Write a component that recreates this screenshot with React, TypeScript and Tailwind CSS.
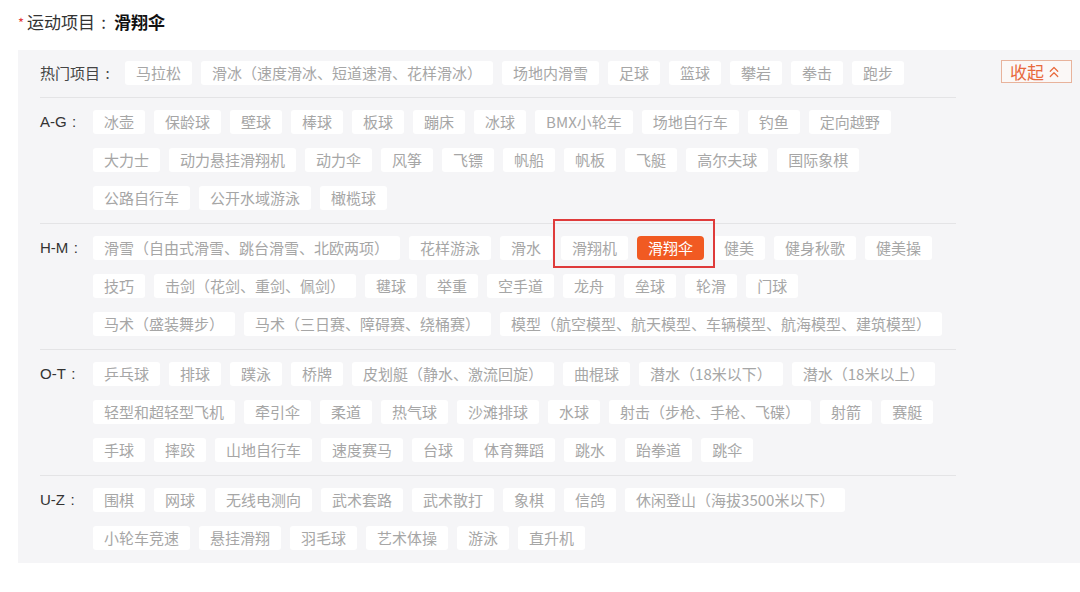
import { ChevronsUp } from 'lucide-react';

const hot = ['马拉松', '滑冰（速度滑冰、短道速滑、花样滑冰）', '场地内滑雪', '足球', '篮球', '攀岩', '拳击', '跑步'];

const groups: { label: string; rows: string[][] }[] = [
  {
    label: 'A-G',
    rows: [
      ['冰壶', '保龄球', '壁球', '棒球', '板球', '蹦床', '冰球', 'BMX小轮车', '场地自行车', '钓鱼', '定向越野'],
      ['大力士', '动力悬挂滑翔机', '动力伞', '风筝', '飞镖', '帆船', '帆板', '飞艇', '高尔夫球', '国际象棋'],
      ['公路自行车', '公开水域游泳', '橄榄球'],
    ],
  },
  {
    label: 'H-M',
    rows: [
      ['滑雪（自由式滑雪、跳台滑雪、北欧两项）', '花样游泳', '滑水', '#box', '健美', '健身秋歌', '健美操'],
      ['技巧', '击剑（花剑、重剑、佩剑）', '毽球', '举重', '空手道', '龙舟', '垒球', '轮滑', '门球'],
      ['马术（盛装舞步）', '马术（三日赛、障碍赛、绕桶赛）', '模型（航空模型、航天模型、车辆模型、航海模型、建筑模型）'],
    ],
  },
  {
    label: 'O-T',
    rows: [
      ['乒乓球', '排球', '蹼泳', '桥牌', '皮划艇（静水、激流回旋）', '曲棍球', '潜水（18米以下）', '潜水（18米以上）'],
      ['轻型和超轻型飞机', '牵引伞', '柔道', '热气球', '沙滩排球', '水球', '射击（步枪、手枪、飞碟）', '射箭', '赛艇'],
      ['手球', '摔跤', '山地自行车', '速度赛马', '台球', '体育舞蹈', '跳水', '跆拳道', '跳伞'],
    ],
  },
  {
    label: 'U-Z',
    rows: [
      ['围棋', '网球', '无线电测向', '武术套路', '武术散打', '象棋', '信鸽', '休闲登山（海拔3500米以下）'],
      ['小轮车竞速', '悬挂滑翔', '羽毛球', '艺术体操', '游泳', '直升机'],
    ],
  },
];

const Colon = () => <span className="inline-block w-[1em] text-center">:</span>;

const Tag = ({ name, active }: { name: string; active?: boolean }) => (
  <span
    className={`h-6 leading-6 px-[11px] text-[15px] whitespace-nowrap ${
      active ? 'bg-[#f15a22] text-white rounded-[4px]' : 'bg-white text-[#a6a6a6] rounded-[3px]'
    }`}
  >
    {name}
  </span>
);

const Row = ({ items }: { items: string[] }) => (
  <div className="flex gap-[9px]">
    {items.map((name) =>
      name === '#box' ? (
        <span key={name} className="relative flex gap-[9px]">
          <Tag name="滑翔机" />
          <Tag name="滑翔伞" active />
          <span className="absolute -top-[17px] -bottom-[8px] -left-[8px] -right-[11px] border-2 border-[#df3b3b]" />
        </span>
      ) : (
        <Tag key={name} name={name} />
      )
    )}
  </div>
);

export default function App() {
  return (
    <div className="w-[1080px] h-[592px] bg-white overflow-hidden pt-[10px] font-['Noto_Sans_CJK_SC','Liberation_Sans',sans-serif]">
      <div className="pl-[18px] h-6 leading-6 text-[17px] text-[#333] flex items-center">
        <span className="text-[#e4393c] text-[13px] self-start leading-[26px] mr-[3px]">*</span>
        <span>
          运动项目
          <Colon />
        </span>
        <span className="font-bold text-[#111] ml-[2px]">滑翔伞</span>
      </div>

      <div className="mt-4 ml-[18px] bg-[#f5f5f7] flex pl-[22px] pr-2">
        <div className="w-[916px]">
          <div className="flex items-center pt-[11px] pb-3 border-b border-[#e4e4e6]">
            <span className="w-[85px] text-[15px] text-[#444] leading-6">
              热门项目
              <Colon />
            </span>
            <Row items={hot} />
          </div>

          {groups.map((g, gi) => (
            <div
              key={g.label}
              className={`flex pt-3 pb-[13px] ${gi < groups.length - 1 ? 'border-b border-[#e4e4e6]' : ''}`}
            >
              <span className="w-[53px] text-[15px] text-[#333] leading-6 font-['Liberation_Sans','Noto_Sans_CJK_SC',sans-serif]">
                {g.label}
                <Colon />
              </span>
              <div className="flex flex-col gap-[14px]">
                {g.rows.map((r, i) => (
                  <Row key={i} items={r} />
                ))}
              </div>
            </div>
          ))}
        </div>

        <div className="ml-auto pt-[10px]">
          <button className="w-[71px] h-[23px] flex items-center justify-center gap-[1px] border border-[#e8b39c] bg-[#fbf8f7] text-[#e8693c] text-[17px] leading-[22px]">
            收起
            <ChevronsUp size={18} strokeWidth={1.6} />
          </button>
        </div>
      </div>
    </div>
  );
}
